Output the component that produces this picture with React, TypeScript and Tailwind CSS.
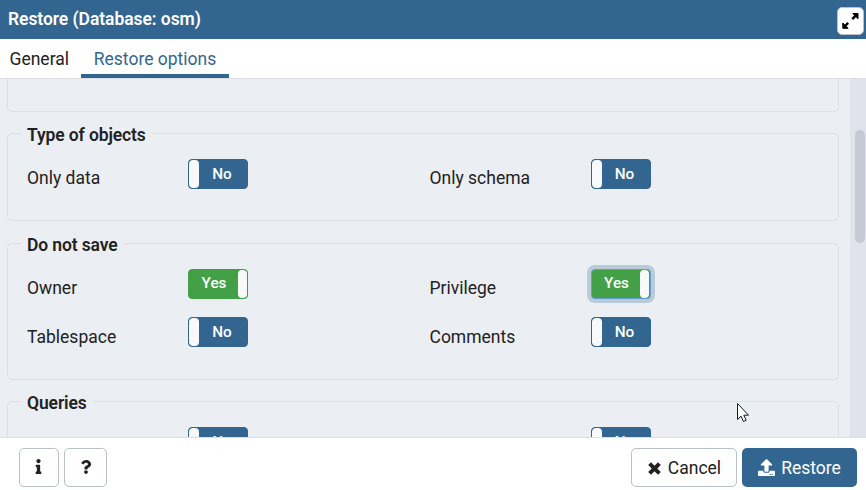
import { FaInfo, FaQuestion, FaUpload } from "react-icons/fa";
import type { ReactNode } from "react";

function Toggle({ on = false, focused = false }: { on?: boolean; focused?: boolean }) {
  const ring = focused ? "border-[#659fcd] ring-4 ring-[#bacad9]" : on ? "border-[#43a047]" : "border-[#326690]";
  return (
    <div
      className={`flex h-[30px] w-[60px] shrink-0 overflow-hidden rounded-[4px] border text-[15.3px] leading-[28px] font-medium text-white ${
        on ? "flex-row-reverse bg-[#43a047]" : "bg-[#326690]"
      } ${ring}`}
    >
      <span className={`h-full rounded-[4px] bg-[#f8f9fb] ${focused ? "mr-px w-[9px]" : on ? "w-[9px]" : "w-[10px]"}`} />
      <span className={`flex-1 text-center ${focused ? "-mt-px pl-0.5" : on ? "-mt-px pl-px" : "pr-0.5"}`}>
        {on ? "Yes" : "No"}
      </span>
    </div>
  );
}

function Field({ label, on, focused }: { label: string; on?: boolean; focused?: boolean }) {
  return (
    <div className="flex h-[30px] w-[402.5px]">
      <span className="w-[161px] pt-1.5 leading-[27px] whitespace-nowrap">{label}</span>
      <Toggle on={on} focused={focused} />
    </div>
  );
}

function Group({ title, className, children }: { title: string; className: string; children: ReactNode }) {
  return (
    <section className={`rounded-[5px] border border-[#dce0e6] pl-[19px] ${className}`}>
      <h2 className="-mt-3 -ml-1.5 h-[26px] w-fit bg-[#ebeef3] px-1.5 leading-[26px] font-semibold tracking-[-0.12px] whitespace-nowrap">
        {title}
      </h2>
      {children}
    </section>
  );
}

function ExpandIcon() {
  return (
    <svg width="17" height="16" viewBox="0 0 17 16" fill="currentColor" stroke="currentColor">
      <path d="M10.8 0.5H16V5.7L14.2 4L12.5 2.3Z" strokeLinejoin="round" />
      <path d="M14 2.4L10.2 6.2M2.7 13.4L6.2 9.9" strokeWidth="2.4" />
      <path d="M0.8 10V15.3H6.1L4.3 13.5L2.6 11.8Z" strokeLinejoin="round" />
    </svg>
  );
}

function CrossIcon() {
  return (
    <svg width="13" height="13" viewBox="0 0 13 13" stroke="currentColor" strokeWidth="4">
      <path d="M1.6 1.6L11.4 11.4M11.4 1.6L1.6 11.4" />
    </svg>
  );
}

export default function App() {
  return (
    <div className="flex h-[490px] w-[866px] flex-col overflow-hidden bg-white font-[Roboto,sans-serif] text-[17.5px] text-[#222222]">
      <header className="flex h-[39px] shrink-0 items-center justify-between bg-[#326690] pr-0.5 pl-2 text-white">
        <h1 className="font-semibold tracking-[-0.06px]">Restore (Database: osm)</h1>
        <button className="mt-[3px] flex h-7 w-[27px] items-center justify-center rounded-[5px] border border-[#bac1cd] bg-white text-black">
          <ExpandIcon />
        </button>
      </header>
      <nav className="flex h-10 shrink-0 border-b border-[#dce0e6] leading-[39px]">
        <button className="w-[81px] pt-px pl-[9.5px] text-left">General</button>
        <button className="h-[39px] w-[148px] border-b-4 border-[#326690] pt-px text-center text-[#326690]">
          Restore options
        </button>
      </nav>
      <main className="flex h-[358px] shrink-0 overflow-hidden bg-[#ebeef3]">
        <div className="w-[850px] pl-[7px]">
          <div className="h-[33px] w-[832px] rounded-b-[5px] border border-t-0 border-[#dce0e6]" />
          <Group title="Type of objects" className="mt-[21px] h-[88px] w-[832px]">
            <div className="mt-[11px] flex">
              <Field label="Only data" />
              <Field label="Only schema" />
            </div>
          </Group>
          <Group title="Do not save" className="mt-[22px] h-[137px] w-[832px]">
            <div className="mt-[11px] flex">
              <Field label="Owner" on />
              <Field label="Privilege" on focused />
            </div>
            <div className="mt-[18px] flex [&_span:first-child]:leading-[29px]">
              <Field label="Tablespace" />
              <Field label="Comments" />
            </div>
          </Group>
          <Group title="Queries" className="mt-[21px] h-[88px] w-[832px]">
            <div className="mt-[11px] flex">
              <Field label="" />
              <Field label="" />
            </div>
          </Group>
        </div>
        <div className="w-4 bg-[#e0e3eb] pt-[51px] pl-[5px]">
          <div className="h-[113px] w-[10px] rounded-full bg-[#c6cad6]" />
        </div>
      </main>
      <footer className="flex h-[53px] shrink-0 justify-between border-t border-[#dce0e6] pt-2.5 pr-[9px] pl-[19px]">
        <div className="flex gap-[5px]">
          <button className="flex h-[39px] w-10 items-center justify-center rounded-[5px] border border-[#b8bfcd] pr-px pb-0.5">
            <FaInfo size={15} />
          </button>
          <button className="flex h-[39px] w-[43px] items-center justify-center rounded-[5px] border border-[#b8bfcd] pb-px">
            <FaQuestion size={14} />
          </button>
        </div>
        <div className="flex gap-[5px]">
          <button className="flex h-[39px] w-[106px] items-center justify-center gap-[7px] rounded-[5px] border border-[#b8bfcd] pt-px pl-px">
            <CrossIcon />
            Cancel
          </button>
          <button className="flex h-[39px] w-[115px] items-center justify-center gap-1.5 rounded-[5px] bg-[#326690] pt-px text-white">
            <FaUpload size={17} className="mb-px" />
            Restore
          </button>
        </div>
      </footer>
      <svg className="absolute top-[402px] left-[736px]" width="14" height="22" viewBox="0 0 14 22">
        <path d="M1.5 1.5V17.5L5 14.2L7.5 19.5L10.2 18.2L7.8 13.2H12.5Z" fill="white" stroke="#151724" />
      </svg>
    </div>
  );
}
